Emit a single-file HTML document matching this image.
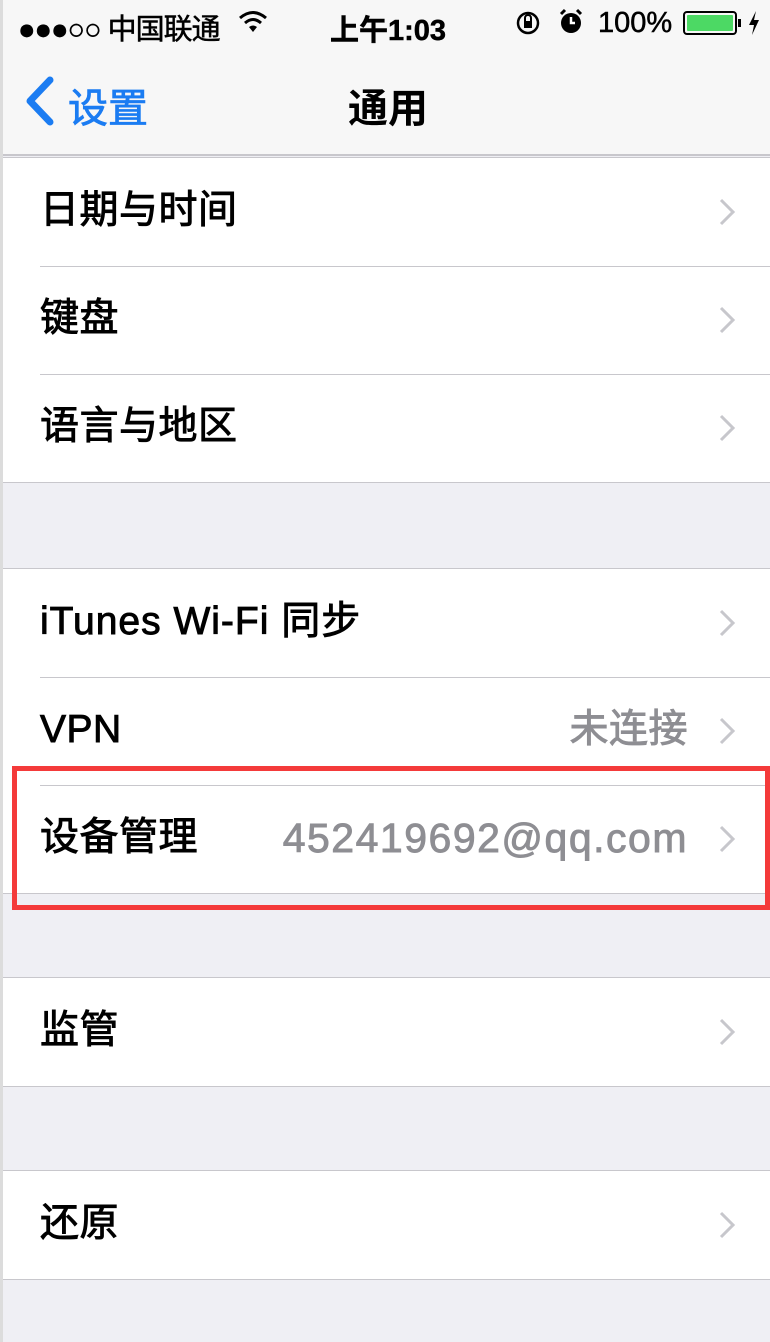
<!DOCTYPE html>
<html><head><meta charset="utf-8"><style>
*{margin:0;padding:0;box-sizing:border-box}
body{width:770px;height:1342px;background:#efeff4;font-family:"Liberation Sans","Noto Sans CJK SC",sans-serif;position:relative;overflow:hidden}
.lb{position:absolute;left:0;top:0;width:3px;height:1342px;background:#dcdcdc;z-index:5}
.status{position:absolute;top:0;left:0;width:770px;height:46px;background:#f7f7f7;font-size:29px;color:#000;-webkit-text-stroke:0.5px #000}
.nav{position:absolute;top:46px;left:0;width:770px;height:110px;background:#f7f7f7;border-bottom:2px solid #c8c7cc}
.group{position:absolute;left:0;width:770px;background:#fff;border-top:1px solid #c8c7cc;border-bottom:1px solid #c8c7cc}
.row{position:relative;height:108px;font-size:39px;line-height:106px;padding-left:40px;color:#000;-webkit-text-stroke:0.9px #000;letter-spacing:0.5px}
.row+.row:before{content:"";position:absolute;left:40px;right:0;top:0;border-top:1px solid #c8c7cc}
.chev{position:absolute;right:34px;top:39px;width:18px;height:30px}
.val{position:absolute;right:82px;top:0;color:#8e8e93;-webkit-text-stroke:0.9px #8e8e93}
</style></head><body>
<div class="lb"></div>
<div class="status">
<span style="position:absolute;left:18px;top:6px;letter-spacing:-1px">●●●○○ 中国联通</span>
<svg style="position:absolute;left:238px;top:10px" width="30" height="24" viewBox="0 0 30 24"><path d="M2 8 Q15 -3 28 8" stroke="#000" stroke-width="3" fill="none"/><path d="M7 13 Q15 6 23 13" stroke="#000" stroke-width="3" fill="none"/><path d="M11 17 L15 22 L19 17 Q15 14 11 17Z" fill="#000"/></svg>
<span style="position:absolute;left:330px;top:7px;font-weight:bold">上午1:03</span>
<svg style="position:absolute;left:515px;top:10px" width="28" height="26" viewBox="0 0 28 26"><circle cx="13" cy="13" r="10" fill="none" stroke="#000" stroke-width="2.5"/><rect x="9" y="11" width="8" height="7" fill="#000"/><path d="M10 11 V8 A3 3 0 0 1 16 8 V11" stroke="#000" stroke-width="2" fill="none"/></svg>
<svg style="position:absolute;left:558px;top:8px" width="26" height="28" viewBox="0 0 26 28"><circle cx="13" cy="15" r="10" fill="#000"/><path d="M13 9 V15 H17" stroke="#fff" stroke-width="2.5" fill="none"/><path d="M3 6 L7 2 M23 6 L19 2" stroke="#000" stroke-width="3"/></svg>
<span style="position:absolute;left:598px;top:7px">100%</span>
<div style="position:absolute;left:683px;top:11px;width:54px;height:24px;border:2px solid #000;border-radius:4px;padding:2px"><div style="width:100%;height:100%;background:#4cd964;border-radius:1px"></div></div>
<div style="position:absolute;left:738px;top:19px;width:3px;height:8px;background:#000"></div>
<svg style="position:absolute;left:747px;top:10px" width="14" height="26" viewBox="0 0 14 26"><path d="M9 1 L2 15 H7 L5 25 L12 10 H7Z" fill="#000"/></svg>
</div>
<div class="nav">
<svg style="position:absolute;left:22px;top:30px" width="36" height="50" viewBox="0 0 36 50"><path d="M28 4 L8 25 L28 46" stroke="#1b7cf2" stroke-width="7" fill="none" stroke-linecap="round" stroke-linejoin="round"/></svg>
<span style="position:absolute;left:68px;top:30px;font-size:40px;color:#1b7cf2;-webkit-text-stroke:0.8px #1b7cf2">设置</span>
<span style="position:absolute;left:348px;top:30px;font-size:40px;font-weight:bold">通用</span>
</div>
<div class="group" style="top:157px"><div class="row">日期与时间<svg class="chev" viewBox="0 0 18 30"><path d="M3 3 L15 15 L3 27" stroke="#c7c7cc" stroke-width="3" fill="none"/></svg></div><div class="row">键盘<svg class="chev" viewBox="0 0 18 30"><path d="M3 3 L15 15 L3 27" stroke="#c7c7cc" stroke-width="3" fill="none"/></svg></div><div class="row">语言与地区<svg class="chev" viewBox="0 0 18 30"><path d="M3 3 L15 15 L3 27" stroke="#c7c7cc" stroke-width="3" fill="none"/></svg></div></div>
<div class="group" style="top:568px"><div class="row" style="letter-spacing:1px">iTunes Wi-Fi 同步<svg class="chev" viewBox="0 0 18 30"><path d="M3 3 L15 15 L3 27" stroke="#c7c7cc" stroke-width="3" fill="none"/></svg></div><div class="row">VPN<span class="val">未连接</span><svg class="chev" viewBox="0 0 18 30"><path d="M3 3 L15 15 L3 27" stroke="#c7c7cc" stroke-width="3" fill="none"/></svg></div><div class="row">设备管理<span class="val" style="font-size:41px;letter-spacing:1.5px">452419692@qq.com</span><svg class="chev" viewBox="0 0 18 30"><path d="M3 3 L15 15 L3 27" stroke="#c7c7cc" stroke-width="3" fill="none"/></svg></div></div>
<div class="group" style="top:977px"><div class="row">监管<svg class="chev" viewBox="0 0 18 30"><path d="M3 3 L15 15 L3 27" stroke="#c7c7cc" stroke-width="3" fill="none"/></svg></div></div>
<div class="group" style="top:1170px"><div class="row">还原<svg class="chev" viewBox="0 0 18 30"><path d="M3 3 L15 15 L3 27" stroke="#c7c7cc" stroke-width="3" fill="none"/></svg></div></div>
<div style="position:absolute;left:12px;top:766px;width:758px;height:144px;border:5px solid #f43a3a;z-index:6"></div>
</body></html>
